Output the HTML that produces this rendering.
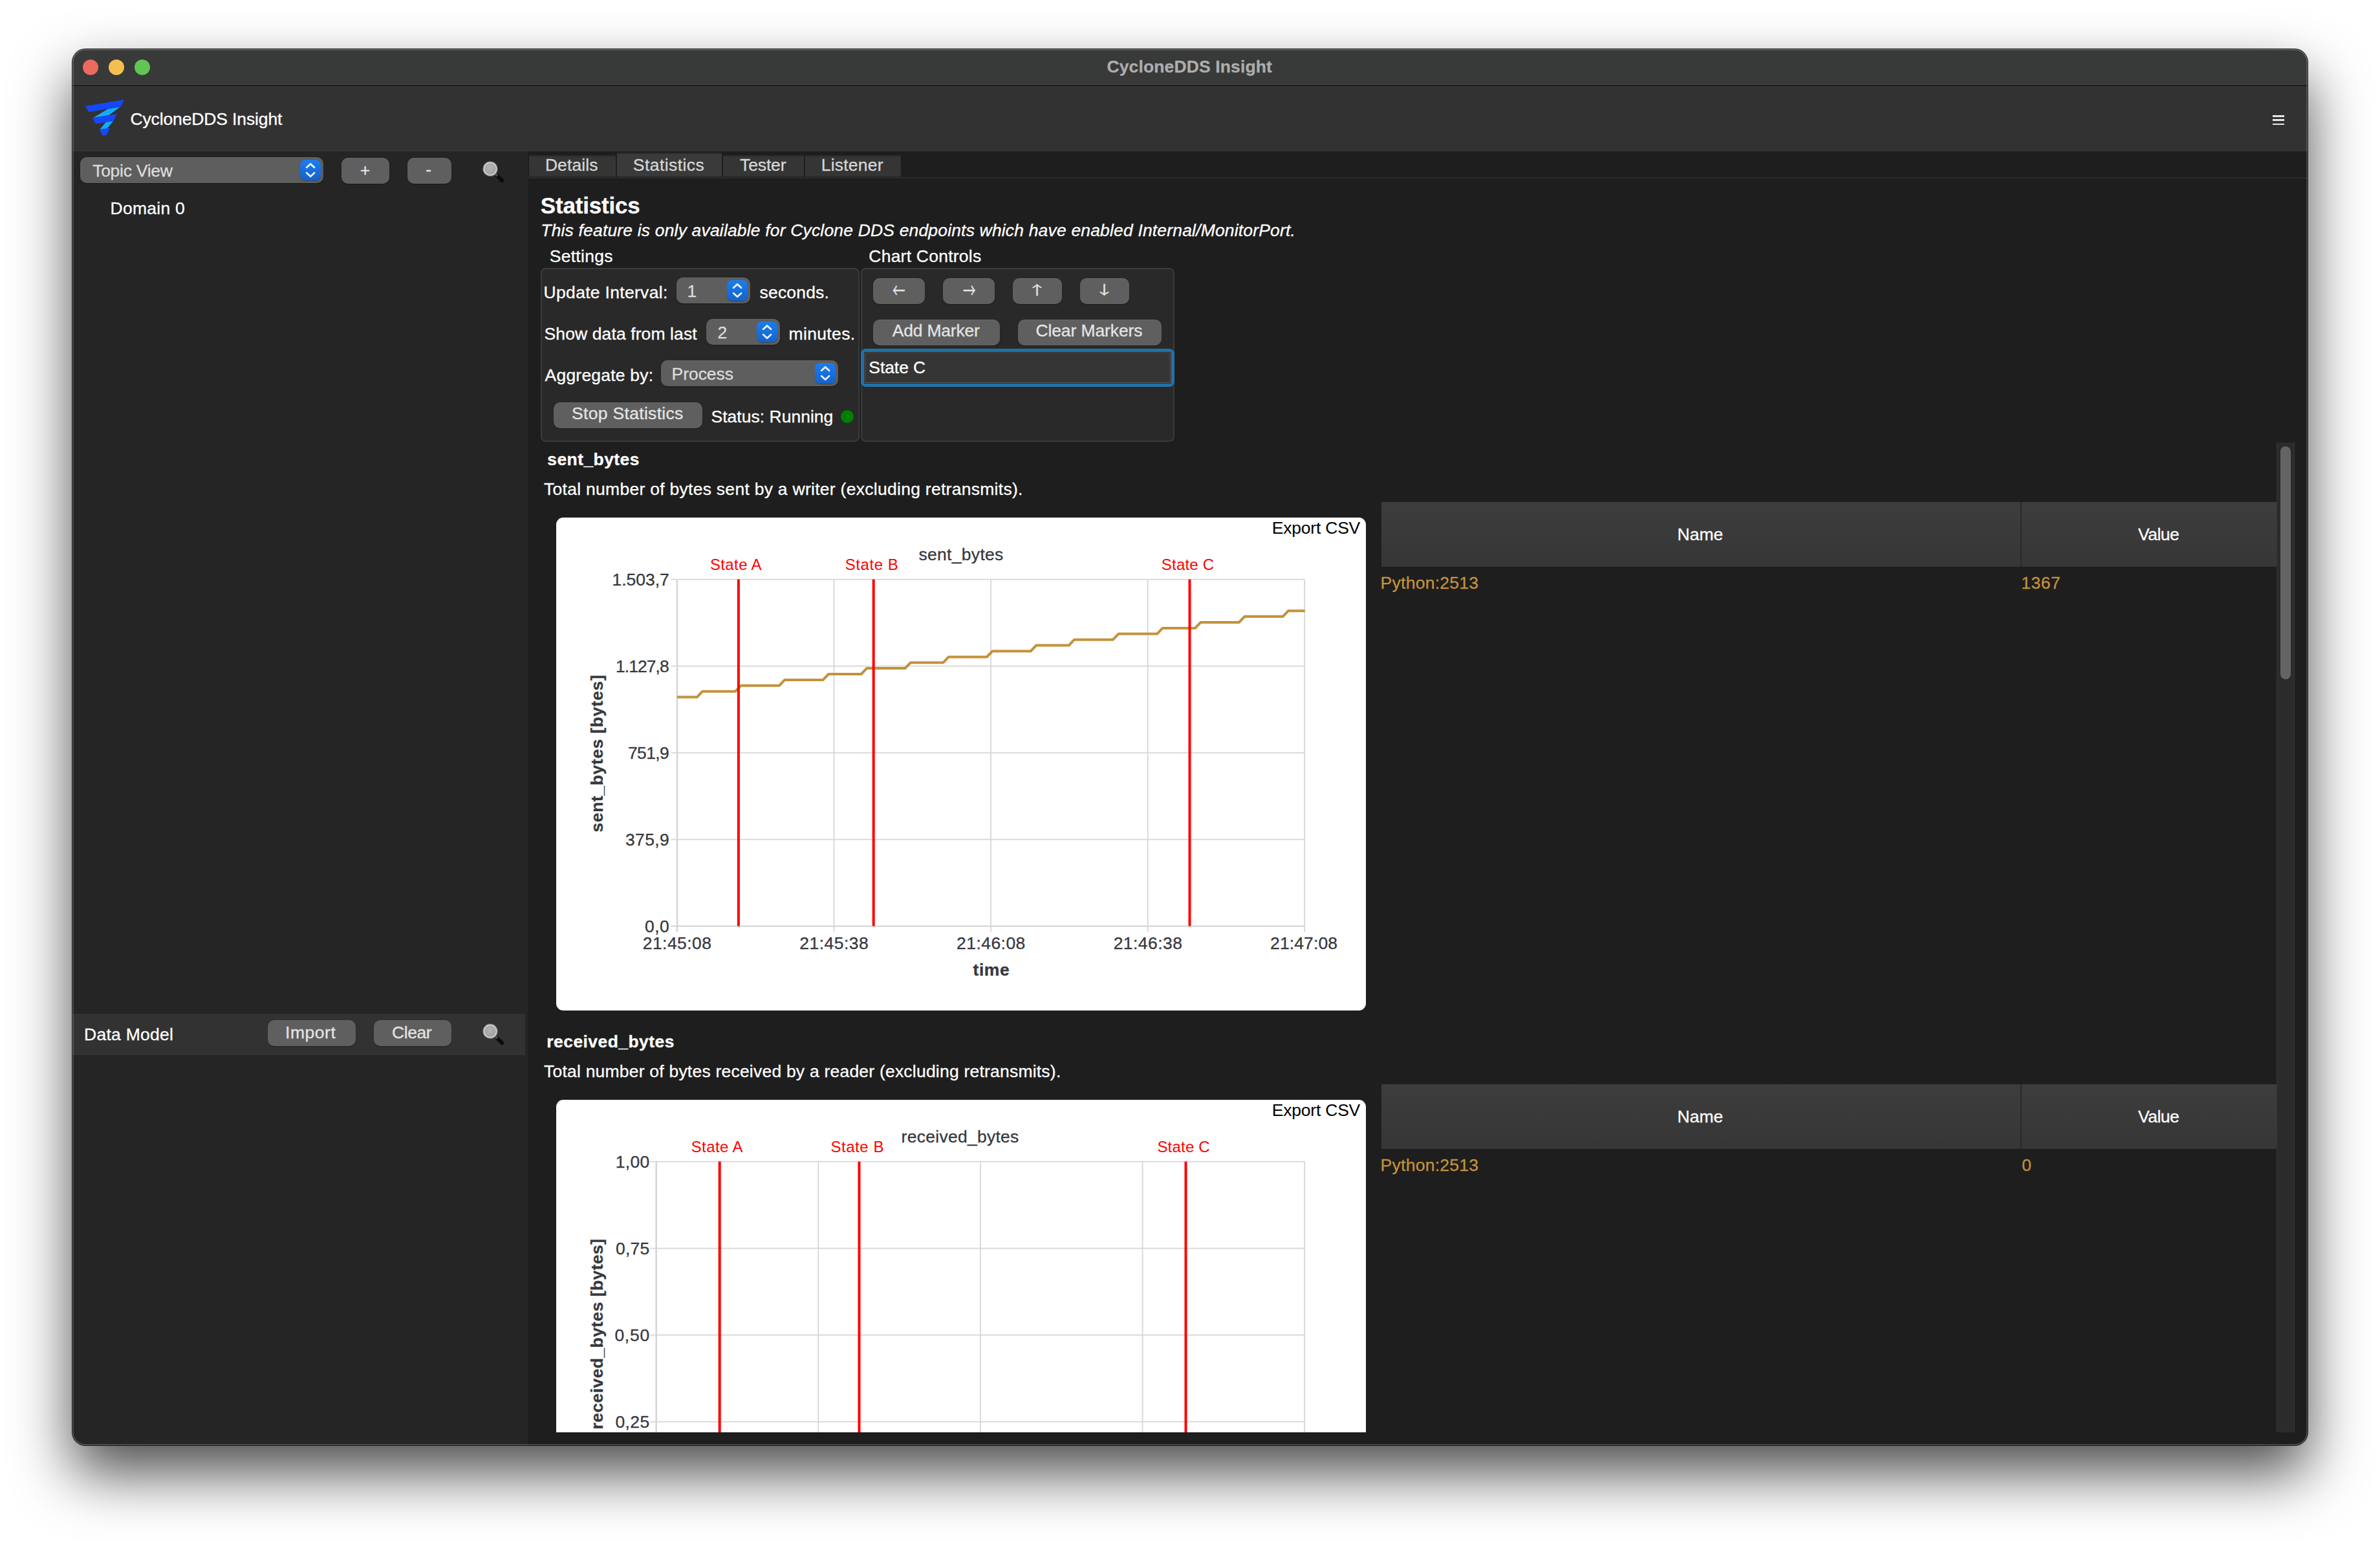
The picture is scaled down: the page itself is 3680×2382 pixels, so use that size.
<!DOCTYPE html>
<html lang="en"><head><meta charset="utf-8"><title>CycloneDDS Insight</title>
<style>
html,body{margin:0;padding:0}
body{width:3680px;height:2382px;background:#fff;position:relative;overflow:hidden;font-family:"Liberation Sans",Arial,sans-serif;-webkit-font-smoothing:antialiased}
div,.abs,header,aside,main,nav,section{position:absolute;box-sizing:border-box;display:block}
.g{left:0;top:0;width:0;height:0}
.t{position:absolute;white-space:pre;line-height:1;display:block;-webkit-text-stroke:.3px}
#win{left:112px;top:76px;width:3456px;height:2158px;border-radius:20px;background:#1e1e1e;box-shadow:0 0 0 1px rgba(0,0,0,.85),0 43px 90px rgba(0,0,0,.7)}
#clip{left:0;top:0;width:3456px;height:2158px;border-radius:20px;overflow:hidden}
#page{left:-112px;top:-76px;width:3680px;height:2382px}
#rim{left:0;top:0;width:3456px;height:2158px;border-radius:20px;box-shadow:inset 0 0 0 1.5px rgba(255,255,255,.24);pointer-events:none}
.btn{background:#5f5f5f;border-radius:10px;box-shadow:0 1px 1.5px rgba(0,0,0,.35),inset 0 1px 0 rgba(255,255,255,.06)}
.combo{background:#5e5e5e;border-radius:10px;box-shadow:0 1px 1.5px rgba(0,0,0,.4),inset 0 1px 0 rgba(255,255,255,.06)}
.stp{width:32px;height:32px;border-radius:8px;background:linear-gradient(#1b7df0,#1463c9);box-shadow:0 1px 1px rgba(0,0,0,.3)}
.stp svg{position:absolute;left:0;top:0}
.grp{background:#292929;border:2px solid #3b3b3b;border-radius:8px}
.tab{background:#353535;border-top:2px solid #2c2c2c;border-bottom:2px solid #2c2c2c}
.chart{background:#fff;border-radius:11px}
.th{background:linear-gradient(#3d3d3d,#363636)}
</style></head><body>
<div id="win"><div id="clip"><div id="page">
<header id="titlebar" class="g">
<div style="left:112px;top:76px;width:3456px;height:56px;background:#383939"></div>
<div style="left:112px;top:132px;width:3456px;height:1px;background:#0a0a0a"></div>
<div style="left:128px;top:92px;width:24px;height:24px;background:#ed6a5e;border-radius:50%"></div>
<div style="left:168px;top:92px;width:24px;height:24px;background:#f5bf4f;border-radius:50%"></div>
<div style="left:208px;top:92px;width:24px;height:24px;background:#61c554;border-radius:50%"></div>
<span class="t" style="left:1711.50px;top:90px;font-size:26.5px;color:#adadad;font-weight:700;letter-spacing:0.122px;">CycloneDDS Insight</span>
</header>
<header id="toolbar" class="g">
<div style="left:112px;top:133px;width:3456px;height:101px;background:#323232"></div>
<svg class="abs" style="left:128px;top:150px" width="68" height="64" viewBox="128 150 68 64"><polygon points="144.0,181.9 166.9,168.4 185.9,165.3 168.5,178.1" fill="#15abfc"/><polygon points="154.5,200.1 163.6,189.0 175.2,187.0 165.8,198.6" fill="#15abfc"/><polygon points="132.0,164.0 192.1,153.9 186.7,164.9 137.4,173.1" fill="#1548fb"/><polygon points="143.1,182.5 180.9,176.0 175.4,186.9 148.1,191.6" fill="#1548fb"/><polygon points="153.9,200.6 170.2,197.8 164.8,208.8 159.4,210.0" fill="#1548fb"/></svg>
<div style="left:3513.5px;top:178.1px;width:18px;height:2.6px;background:#e6e6e6"></div>
<div style="left:3513.5px;top:184.3px;width:18px;height:2.6px;background:#e6e6e6"></div>
<div style="left:3513.5px;top:190.5px;width:18px;height:2.6px;background:#e6e6e6"></div>
<span class="t" style="left:201.50px;top:171px;font-size:26.5px;color:#ffffff;letter-spacing:-0.133px;">CycloneDDS Insight</span>
</header>
<aside id="sidebar" class="g">
<div style="left:112px;top:234px;width:704px;height:2000px;background:#252525"></div>
<div class="combo" style="left:124px;top:243px;width:376px;height:40px;"></div>
<div class="stp" style="left:464px;top:247px"><svg width="32" height="32" viewBox="0 0 32 32"><path d="M10.2 11.8 L16.1 6.4 L22 11.8 M10.2 20.3 L16.1 25.7 L22 20.3" fill="none" stroke="#fff" stroke-opacity=".9" stroke-width="2.8" stroke-linecap="round" stroke-linejoin="round"/></svg></div>
<div class="btn" style="left:528px;top:244px;width:74px;height:40px;"></div>
<div class="btn" style="left:630px;top:244px;width:68px;height:40px;"></div>
<svg class="abs" style="left:741.7px;top:245px" width="44" height="44" viewBox="0 0 44 44"><defs><radialGradient id="lg1018" cx="45%" cy="40%" r="60%"><stop offset="0" stop-color="#b4b4b4"/><stop offset="1" stop-color="#a2a2a2"/></radialGradient></defs><path d="M26.5 26.5 L34.2 34.2" stroke="#0c0c0c" stroke-width="6" stroke-linecap="round"/><path d="M23.5 23.5 L27 27" stroke="#4a4a4a" stroke-width="3.6"/><circle cx="16" cy="16" r="11.8" fill="#646464"/><circle cx="16" cy="16" r="10.7" fill="#cfcfcf"/><circle cx="16" cy="16" r="8.8" fill="url(#lg1018)"/></svg>
<div style="left:112px;top:1567px;width:700px;height:64px;background:#323232"></div>
<div class="btn" style="left:414px;top:1577px;width:136px;height:40px;"></div>
<div class="btn" style="left:578px;top:1577px;width:120px;height:40px;"></div>
<svg class="abs" style="left:741.7px;top:1578.4px" width="44" height="44" viewBox="0 0 44 44"><defs><radialGradient id="lg2352" cx="45%" cy="40%" r="60%"><stop offset="0" stop-color="#b4b4b4"/><stop offset="1" stop-color="#a2a2a2"/></radialGradient></defs><path d="M26.5 26.5 L34.2 34.2" stroke="#0c0c0c" stroke-width="6" stroke-linecap="round"/><path d="M23.5 23.5 L27 27" stroke="#4a4a4a" stroke-width="3.6"/><circle cx="16" cy="16" r="11.8" fill="#646464"/><circle cx="16" cy="16" r="10.7" fill="#cfcfcf"/><circle cx="16" cy="16" r="8.8" fill="url(#lg2352)"/></svg>
<span class="t" style="left:143.20px;top:251px;font-size:26.5px;color:#dcdcdc;letter-spacing:-0.283px;">Topic View</span>
<span class="t" style="left:557.00px;top:250px;font-size:26px;color:#e4e4e4;">+</span>
<span class="t" style="left:658.30px;top:249px;font-size:26px;color:#e4e4e4;">-</span>
<span class="t" style="left:170.50px;top:309px;font-size:26.5px;color:#ffffff;letter-spacing:0.261px;">Domain 0</span>
<span class="t" style="left:130.00px;top:1586px;font-size:26.5px;color:#ffffff;letter-spacing:0.264px;">Data Model</span>
<span class="t" style="left:441.10px;top:1583px;font-size:26.5px;color:#e4e4e4;letter-spacing:0.512px;">Import</span>
<span class="t" style="left:606.10px;top:1583px;font-size:26.5px;color:#e4e4e4;letter-spacing:-0.450px;">Clear</span>
</aside>
<main id="main" class="g">
<div style="left:816px;top:234px;width:2752px;height:2000px;background:#1e1e1e"></div>
<nav id="tabs" class="g">
<div style="left:816px;top:274px;width:2752px;height:2px;background:#292929"></div>
<div class="tab" style="left:818px;top:240px;width:134px;height:34px;"></div>
<div class="tab" style="left:954px;top:236px;width:162px;height:38px;background:#3a3a3a"></div>
<div class="tab" style="left:1118px;top:240px;width:125px;height:34px;"></div>
<div class="tab" style="left:1245px;top:240px;width:148px;height:34px;"></div>
<span class="t" style="left:842.90px;top:242px;font-size:26.5px;color:#d6d6d6;letter-spacing:0.092px;">Details</span>
<span class="t" style="left:978.80px;top:242px;font-size:26.5px;color:#d6d6d6;letter-spacing:0.436px;">Statistics</span>
<span class="t" style="left:1144.10px;top:242px;font-size:26.5px;color:#d6d6d6;letter-spacing:-0.148px;">Tester</span>
<span class="t" style="left:1269.70px;top:242px;font-size:26.5px;color:#d6d6d6;letter-spacing:0.235px;">Listener</span>
</nav>
<section id="stats" class="g">
<div class="grp" style="left:836px;top:414px;width:493px;height:269px;"></div>
<div class="grp" style="left:1331px;top:414px;width:485px;height:269px;"></div>
<div class="combo" style="left:1046px;top:429px;width:114px;height:40px;"></div>
<div class="stp" style="left:1124px;top:433px"><svg width="32" height="32" viewBox="0 0 32 32"><path d="M10.2 11.8 L16.1 6.4 L22 11.8 M10.2 20.3 L16.1 25.7 L22 20.3" fill="none" stroke="#fff" stroke-opacity=".9" stroke-width="2.8" stroke-linecap="round" stroke-linejoin="round"/></svg></div>
<div class="combo" style="left:1092px;top:493px;width:114px;height:40px;"></div>
<div class="stp" style="left:1170px;top:497px"><svg width="32" height="32" viewBox="0 0 32 32"><path d="M10.2 11.8 L16.1 6.4 L22 11.8 M10.2 20.3 L16.1 25.7 L22 20.3" fill="none" stroke="#fff" stroke-opacity=".9" stroke-width="2.8" stroke-linecap="round" stroke-linejoin="round"/></svg></div>
<div class="combo" style="left:1022px;top:557px;width:274px;height:40px;"></div>
<div class="stp" style="left:1260px;top:561px"><svg width="32" height="32" viewBox="0 0 32 32"><path d="M10.2 11.8 L16.1 6.4 L22 11.8 M10.2 20.3 L16.1 25.7 L22 20.3" fill="none" stroke="#fff" stroke-opacity=".9" stroke-width="2.8" stroke-linecap="round" stroke-linejoin="round"/></svg></div>
<div class="btn" style="left:856px;top:622px;width:230px;height:39.5px;"></div>
<div style="left:1300.3px;top:634px;width:19.8px;height:19.8px;background:#008000;border-radius:50%"></div>
<div class="btn" style="left:1350px;top:430px;width:80px;height:40px;"></div>
<div class="btn" style="left:1458px;top:430px;width:80px;height:40px;"></div>
<div class="btn" style="left:1566px;top:430px;width:76px;height:40px;"></div>
<div class="btn" style="left:1670px;top:430px;width:76px;height:40px;"></div>
<div class="btn" style="left:1350px;top:494px;width:196px;height:40px;"></div>
<div class="btn" style="left:1574px;top:494px;width:222px;height:40px;"></div>
<div style="left:1330.5px;top:538.5px;width:485px;height:59px;background:#2271a8;border-radius:8px"></div>
<div style="left:1336.5px;top:544.5px;width:473px;height:47px;background:#353535;border:1.5px solid #5a5a5a;border-top-color:#4a4a4a;box-shadow:0 0 0 1px #2a2a2a"></div>
<span class="t" style="left:835.80px;top:300px;font-size:35px;color:#ffffff;font-weight:700;letter-spacing:-0.184px;">Statistics</span>
<span class="t" style="left:836.30px;top:343px;font-size:26.5px;color:#ffffff;font-style:italic;letter-spacing:0.168px;">This feature is only available for Cyclone DDS endpoints which have enabled Internal/MonitorPort.</span>
<span class="t" style="left:849.70px;top:383px;font-size:26.5px;color:#ffffff;letter-spacing:0.285px;">Settings</span>
<span class="t" style="left:1343.30px;top:383px;font-size:26.5px;color:#ffffff;letter-spacing:0.232px;">Chart Controls</span>
<span class="t" style="left:840.60px;top:439px;font-size:26.5px;color:#ffffff;letter-spacing:0.306px;">Update Interval:</span>
<span class="t" style="left:1062.50px;top:437px;font-size:26.5px;color:#dcdcdc;">1</span>
<span class="t" style="left:1174.60px;top:439px;font-size:26.5px;color:#ffffff;letter-spacing:0.171px;">seconds.</span>
<span class="t" style="left:841.60px;top:503px;font-size:26.5px;color:#ffffff;letter-spacing:0.104px;">Show data from last</span>
<span class="t" style="left:1109.60px;top:501px;font-size:26.5px;color:#dcdcdc;">2</span>
<span class="t" style="left:1219.50px;top:503px;font-size:26.5px;color:#ffffff;letter-spacing:0.359px;">minutes.</span>
<span class="t" style="left:842.60px;top:567px;font-size:26.5px;color:#ffffff;letter-spacing:0.205px;">Aggregate by:</span>
<span class="t" style="left:1038.50px;top:565px;font-size:26.5px;color:#dcdcdc;letter-spacing:-0.029px;">Process</span>
<span class="t" style="left:884.00px;top:626px;font-size:26.5px;color:#e4e4e4;letter-spacing:0.318px;">Stop Statistics</span>
<span class="t" style="left:1099.50px;top:631px;font-size:26.5px;color:#ffffff;letter-spacing:0.019px;">Status: Running</span>
<span class="t" style="left:1379.70px;top:498px;font-size:26.5px;color:#e4e4e4;letter-spacing:-0.193px;">Add Marker</span>
<span class="t" style="left:1601.40px;top:498px;font-size:26.5px;color:#e4e4e4;letter-spacing:-0.103px;">Clear Markers</span>
<span class="t" style="left:1343.30px;top:555px;font-size:26.5px;color:#ffffff;letter-spacing:-0.073px;">State C</span>
<span class="t" style="left:1380px;top:431px;color:#e4e4e4;transform-origin:0 0;font-family:'Noto Sans CJK SC','DejaVu Sans',sans-serif;font-size:31px;transform:scaleX(.63)">←</span>
<span class="t" style="left:1489px;top:431px;color:#e4e4e4;transform-origin:0 0;font-family:'Noto Sans CJK SC','DejaVu Sans',sans-serif;font-size:31px;transform:scaleX(.63)">→</span>
<span class="t" style="left:1588px;top:438px;color:#e4e4e4;transform-origin:0 0;font-family:'Noto Sans CJK SC','DejaVu Sans',sans-serif;font-size:31px;transform:scaleY(.63)">↑</span>
<span class="t" style="left:1692px;top:437px;color:#e4e4e4;transform-origin:0 0;font-family:'Noto Sans CJK SC','DejaVu Sans',sans-serif;font-size:31px;transform:scaleY(.63)">↓</span>
</section>
<section id="scroll" style="left:816px;top:684px;width:2752px;height:1530px;overflow:hidden"><div id="scrolled" style="left:-816px;top:-684px;width:3680px;height:2382px">
<div class="chart" style="left:860px;top:800px;width:1252px;height:761.7px;"></div>
<svg class="abs" style="left:860px;top:800px" width="1252" height="761.7" viewBox="860 800 1252 761.7"><line x1="1037.5" y1="895.6" x2="2017.2" y2="895.6" stroke="#d6d6d6" stroke-width="1.8"/><line x1="1037.5" y1="1029.6" x2="2017.2" y2="1029.6" stroke="#d6d6d6" stroke-width="1.8"/><line x1="1037.5" y1="1163.6" x2="2017.2" y2="1163.6" stroke="#d6d6d6" stroke-width="1.8"/><line x1="1037.5" y1="1297.6" x2="2017.2" y2="1297.6" stroke="#d6d6d6" stroke-width="1.8"/><line x1="1037.5" y1="1431.6" x2="2017.2" y2="1431.6" stroke="#d6d6d6" stroke-width="2.2"/><line x1="1047.0" y1="895.6" x2="1047.0" y2="1440.6" stroke="#d6d6d6" stroke-width="2.6"/><line x1="1289.5" y1="895.6" x2="1289.5" y2="1440.6" stroke="#d6d6d6" stroke-width="1.8"/><line x1="1532.1" y1="895.6" x2="1532.1" y2="1440.6" stroke="#d6d6d6" stroke-width="1.8"/><line x1="1774.7" y1="895.6" x2="1774.7" y2="1440.6" stroke="#d6d6d6" stroke-width="1.8"/><line x1="2017.2" y1="895.6" x2="2017.2" y2="1440.6" stroke="#d6d6d6" stroke-width="1.8"/><polyline points="1047.0,1077.6 1077.7,1077.6 1086.2,1068.7 1137.1,1068.7 1145.6,1059.8 1204.8,1059.8 1213.3,1050.9 1272.6,1050.9 1281.1,1042.0 1331.6,1042.0 1340.1,1033.1 1399.3,1033.1 1407.8,1024.3 1458.3,1024.3 1466.8,1015.4 1526.0,1015.4 1534.5,1006.5 1593.7,1006.5 1602.2,997.6 1652.7,997.6 1661.2,988.7 1720.9,988.7 1729.4,979.8 1789.1,979.8 1797.6,970.9 1848.0,970.9 1856.5,962.0 1915.8,962.0 1924.3,953.1 1983.5,953.1 1992.0,944.2 2017.7,944.2" fill="none" stroke="#c4923b" stroke-width="4" stroke-linejoin="round"/><line x1="1141.9" y1="895.6" x2="1141.9" y2="1431.6" stroke="#ff0000" stroke-width="4"/><line x1="1350.7" y1="895.6" x2="1350.7" y2="1431.6" stroke="#ff0000" stroke-width="4"/><line x1="1839.5" y1="895.6" x2="1839.5" y2="1431.6" stroke="#ff0000" stroke-width="4"/></svg>
<div class="th" style="left:2136px;top:776px;width:1412px;height:100px;"></div>
<div style="left:3123.6px;top:776px;width:2px;height:100px;background:#2a2a2a"></div>
<div class="chart" style="left:860px;top:1700px;width:1252px;height:761.7px;"></div>
<svg class="abs" style="left:860px;top:1700px" width="1252" height="761.7" viewBox="860 1700 1252 761.7"><line x1="1005.2" y1="1795.6" x2="2017.2" y2="1795.6" stroke="#d6d6d6" stroke-width="1.8"/><line x1="1005.2" y1="1929.6" x2="2017.2" y2="1929.6" stroke="#d6d6d6" stroke-width="1.8"/><line x1="1005.2" y1="2063.6" x2="2017.2" y2="2063.6" stroke="#d6d6d6" stroke-width="1.8"/><line x1="1005.2" y1="2197.6" x2="2017.2" y2="2197.6" stroke="#d6d6d6" stroke-width="1.8"/><line x1="1005.2" y1="2331.6" x2="2017.2" y2="2331.6" stroke="#d6d6d6" stroke-width="2.2"/><line x1="1014.7" y1="1795.6" x2="1014.7" y2="2340.6" stroke="#d6d6d6" stroke-width="2.6"/><line x1="1265.3" y1="1795.6" x2="1265.3" y2="2340.6" stroke="#d6d6d6" stroke-width="1.8"/><line x1="1516.0" y1="1795.6" x2="1516.0" y2="2340.6" stroke="#d6d6d6" stroke-width="1.8"/><line x1="1766.6" y1="1795.6" x2="1766.6" y2="2340.6" stroke="#d6d6d6" stroke-width="1.8"/><line x1="2017.2" y1="1795.6" x2="2017.2" y2="2340.6" stroke="#d6d6d6" stroke-width="1.8"/><line x1="1112.7" y1="1795.6" x2="1112.7" y2="2331.6" stroke="#ff0000" stroke-width="4"/><line x1="1328.5" y1="1795.6" x2="1328.5" y2="2331.6" stroke="#ff0000" stroke-width="4"/><line x1="1833.5" y1="1795.6" x2="1833.5" y2="2331.6" stroke="#ff0000" stroke-width="4"/></svg>
<div class="th" style="left:2136px;top:1676px;width:1412px;height:100px;"></div>
<div style="left:3123.6px;top:1676px;width:2px;height:100px;background:#2a2a2a"></div>
<span class="t" style="left:846.30px;top:697px;font-size:26.5px;color:#ffffff;font-weight:700;letter-spacing:0.410px;">sent_bytes</span>
<span class="t" style="left:841.00px;top:743px;font-size:26.5px;color:#ffffff;letter-spacing:0.278px;">Total number of bytes sent by a writer (excluding retransmits).</span>
<span class="t" style="left:1966.80px;top:803px;font-size:26.5px;color:#000;-webkit-text-stroke:0;letter-spacing:-0.218px;">Export CSV</span>
<span class="t" style="left:1420.50px;top:844px;font-size:26.5px;color:#37383e;letter-spacing:0.298px;">sent_bytes</span>
<span class="t" style="left:1097.92px;top:861px;font-size:24px;color:#ff0000;-webkit-text-stroke:0;letter-spacing:0.382px;">State A</span>
<span class="t" style="left:1306.80px;top:861px;font-size:24px;color:#ff0000;-webkit-text-stroke:0;letter-spacing:0.549px;">State B</span>
<span class="t" style="left:1795.79px;top:861px;font-size:24px;color:#ff0000;-webkit-text-stroke:0;letter-spacing:0.215px;">State C</span>
<span class="t" style="left:946.60px;top:883px;font-size:26.5px;color:#37383e;letter-spacing:-0.046px;">1.503,7</span>
<span class="t" style="left:952.00px;top:1017px;font-size:26.5px;color:#37383e;letter-spacing:-0.946px;">1.127,8</span>
<span class="t" style="left:971.00px;top:1151px;font-size:26.5px;color:#37383e;letter-spacing:-0.644px;">751,9</span>
<span class="t" style="left:967.00px;top:1285px;font-size:26.5px;color:#37383e;letter-spacing:0.356px;">375,9</span>
<span class="t" style="left:997.00px;top:1419px;font-size:26.5px;color:#37383e;letter-spacing:0.450px;">0,0</span>
<span class="t" style="left:931.50px;top:1263.56px;transform-origin:0 22.44px;transform:rotate(-90deg);font-size:26.5px;color:#37383e;font-weight:700;letter-spacing:0.620px;">sent_bytes [bytes]</span>
<span class="t" style="left:993.70px;top:1445px;font-size:26.5px;color:#37383e;letter-spacing:0.455px;">21:45:08</span>
<span class="t" style="left:1236.35px;top:1445px;font-size:26.5px;color:#37383e;letter-spacing:0.455px;">21:45:38</span>
<span class="t" style="left:1479.00px;top:1445px;font-size:26.5px;color:#37383e;letter-spacing:0.455px;">21:46:08</span>
<span class="t" style="left:1721.65px;top:1445px;font-size:26.5px;color:#37383e;letter-spacing:0.455px;">21:46:38</span>
<span class="t" style="left:1964.10px;top:1445px;font-size:26.5px;color:#37383e;letter-spacing:0.112px;">21:47:08</span>
<span class="t" style="left:1504.60px;top:1486px;font-size:26.5px;color:#37383e;font-weight:700;letter-spacing:0.517px;">time</span>
<span class="t" style="left:2593.50px;top:813px;font-size:26.5px;color:#ffffff;letter-spacing:0.017px;">Name</span>
<span class="t" style="left:3306.00px;top:813px;font-size:26.5px;color:#ffffff;letter-spacing:-0.518px;">Value</span>
<span class="t" style="left:2134.60px;top:888px;font-size:26.5px;color:#c4923b;letter-spacing:0.262px;">Python:2513</span>
<span class="t" style="left:3125.30px;top:888px;font-size:26.5px;color:#c4923b;letter-spacing:0.495px;">1367</span>
<span class="t" style="left:845.30px;top:1597px;font-size:26.5px;color:#ffffff;font-weight:700;letter-spacing:0.432px;">received_bytes</span>
<span class="t" style="left:841.00px;top:1643px;font-size:26.5px;color:#ffffff;letter-spacing:0.215px;">Total number of bytes received by a reader (excluding retransmits).</span>
<span class="t" style="left:1966.80px;top:1703px;font-size:26.5px;color:#000;-webkit-text-stroke:0;letter-spacing:-0.218px;">Export CSV</span>
<span class="t" style="left:1393.60px;top:1744px;font-size:26.5px;color:#37383e;letter-spacing:0.270px;">received_bytes</span>
<span class="t" style="left:1068.72px;top:1761px;font-size:24px;color:#ff0000;-webkit-text-stroke:0;letter-spacing:0.382px;">State A</span>
<span class="t" style="left:1284.42px;top:1761px;font-size:24px;color:#ff0000;-webkit-text-stroke:0;letter-spacing:0.549px;">State B</span>
<span class="t" style="left:1789.38px;top:1761px;font-size:24px;color:#ff0000;-webkit-text-stroke:0;letter-spacing:0.215px;">State C</span>
<span class="t" style="left:951.80px;top:1783px;font-size:26.5px;color:#37383e;letter-spacing:0.254px;">1,00</span>
<span class="t" style="left:952.10px;top:1917px;font-size:26.5px;color:#37383e;letter-spacing:0.154px;">0,75</span>
<span class="t" style="left:950.40px;top:2051px;font-size:26.5px;color:#37383e;letter-spacing:0.720px;">0,50</span>
<span class="t" style="left:951.40px;top:2185px;font-size:26.5px;color:#37383e;letter-spacing:0.387px;">0,25</span>
<span class="t" style="left:931.50px;top:2187.06px;transform-origin:0 22.44px;transform:rotate(-90deg);font-size:26.5px;color:#37383e;font-weight:700;letter-spacing:0.418px;">received_bytes [bytes]</span>
<span class="t" style="left:2593.50px;top:1713px;font-size:26.5px;color:#ffffff;letter-spacing:0.017px;">Name</span>
<span class="t" style="left:3306.00px;top:1713px;font-size:26.5px;color:#ffffff;letter-spacing:-0.518px;">Value</span>
<span class="t" style="left:2134.60px;top:1788px;font-size:26.5px;color:#c4923b;letter-spacing:0.262px;">Python:2513</span>
<span class="t" style="left:3126.30px;top:1788px;font-size:26.5px;color:#c4923b;">0</span>
</div></section>
<div style="left:3520px;top:684px;width:28px;height:1530px;background:#2b2b2b;border-left:1px solid #353535;border-right:1px solid #353535"></div>
<div style="left:3526px;top:690px;width:16px;height:360px;background:#646464;border-radius:8px"></div>
</main>
</div></div><div id="rim"></div></div>
</body></html>
